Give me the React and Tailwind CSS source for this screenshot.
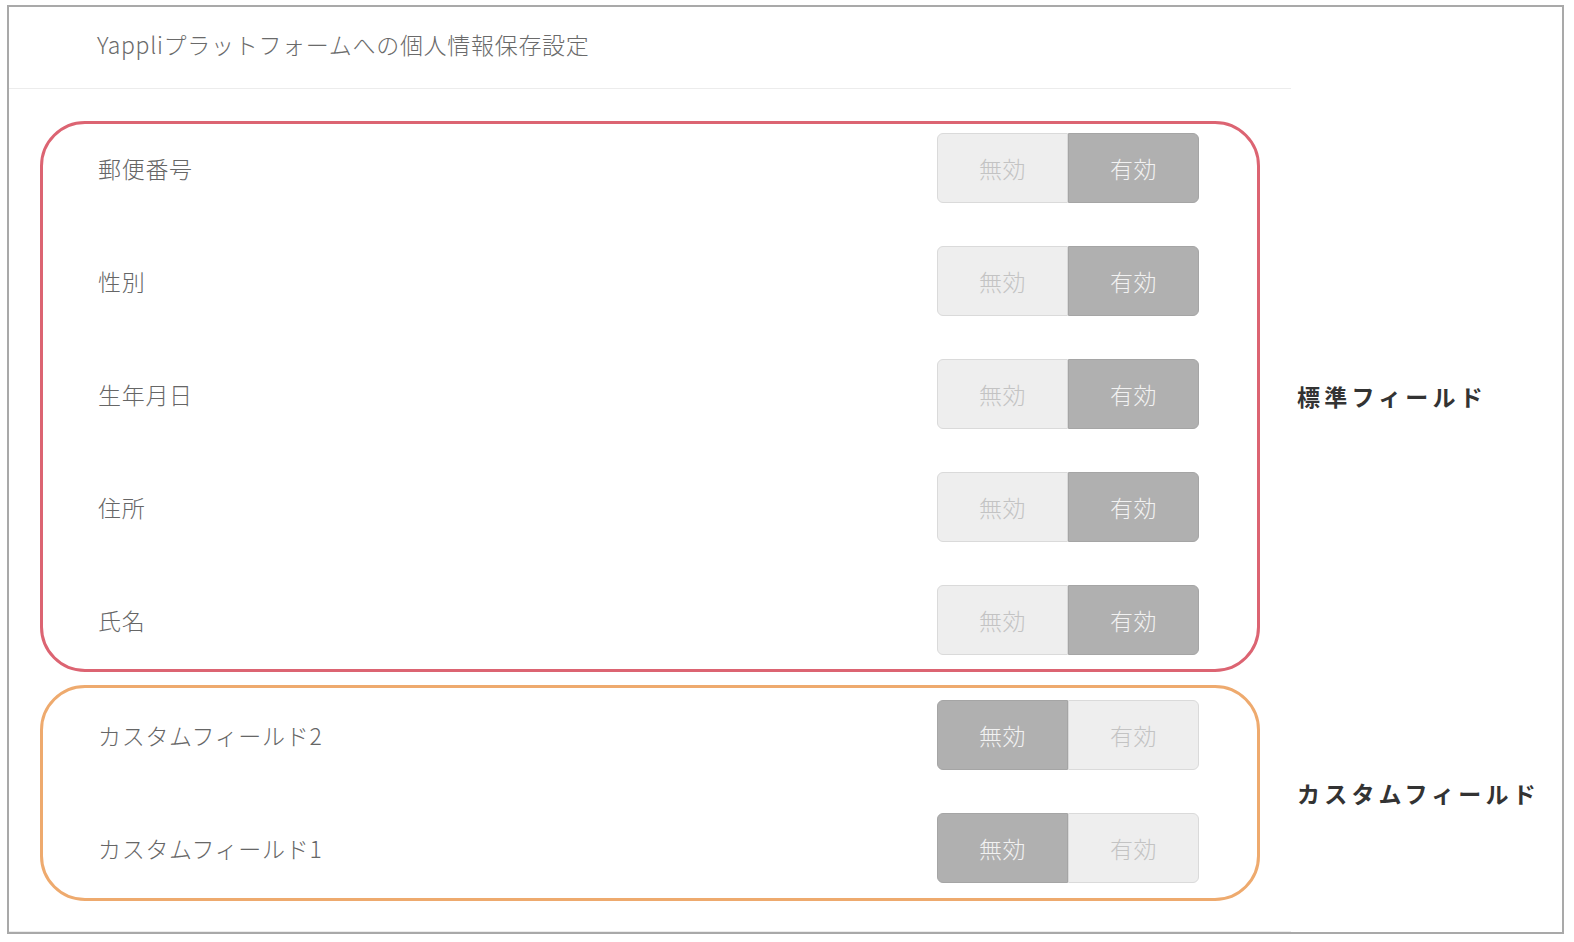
import React from 'react';

const FONT = { fontFamily: '"Noto Sans CJK JP", "Noto Sans", sans-serif' };

const standardFields = ['郵便番号', '性別', '生年月日', '住所', '氏名'];
const customFields = ['カスタムフィールド2', 'カスタムフィールド1'];

const Toggle = ({ enabled }) => {
    const on = 'bg-[#b0b0b0] border-[#a5a5a5] text-[#f2f2f2]';
    const off = 'bg-[#eeeeee] border-[#dadada] text-[#c3c3c3]';
    return (
        <div className="flex w-[262px] h-[70px] text-[23px] font-light tracking-[0.5px]">
            <div className={`flex-1 flex items-center justify-center border rounded-l-[6px] ${enabled ? off : on}`}>
                無効
            </div>
            <div className={`flex-1 flex items-center justify-center border rounded-r-[6px] ${enabled ? on : off}`}>
                有効
            </div>
        </div>
    );
};

const FieldRow = ({ label, enabled }) => (
    <div className="flex items-center justify-between pl-[55px] pr-[58px]">
        <span className="text-[23px] font-light tracking-[0.7px] text-[#666666]">{label}</span>
        <Toggle enabled={enabled} />
    </div>
);

const Group = ({ fields, enabled, title, boxClass }) => (
    <div className="flex items-center">
        <div className={`ml-[31px] w-[1220px] border-[3px] rounded-[45px] flex flex-col gap-[43px] ${boxClass}`}>
            {fields.map((f) => (
                <FieldRow key={f} label={f} enabled={enabled} />
            ))}
        </div>
        <div className="ml-[37px] text-[23px] font-bold tracking-[4.2px] text-[#333333] whitespace-nowrap">
            {title}
        </div>
    </div>
);

export default function App() {
    return (
        <div className="min-h-screen bg-white pt-[5px] pl-[7px]" style={FONT}>
            <div className="w-[1557px] h-[929px] border-2 border-[#a9a9a9] flex flex-col">
                {/* header */}
                <div className="w-[1282px] h-[82px] border-b border-[#ececec] pl-[88px] pt-[20px]">
                    <h1 className="text-[23px] leading-[34px] text-[#6a6a6a] font-light tracking-[0.7px]">
                        Yappliプラットフォームへの個人情報保存設定
                    </h1>
                </div>

                <div className="mt-[32px]">
                    <Group
                        fields={standardFields}
                        enabled
                        title="標準フィールド"
                        boxClass="border-[#dc6472] pt-[9px] pb-[14px]"
                    />
                </div>

                <div className="mt-[13px]">
                    <Group
                        fields={customFields}
                        enabled={false}
                        title="カスタムフィールド"
                        boxClass="border-[#eeaa6e] pt-[12px] pb-[15px]"
                    />
                </div>

                <div className="w-[1282px] flex-1 border-b border-[#ececec]"></div>
            </div>
        </div>
    );
}
